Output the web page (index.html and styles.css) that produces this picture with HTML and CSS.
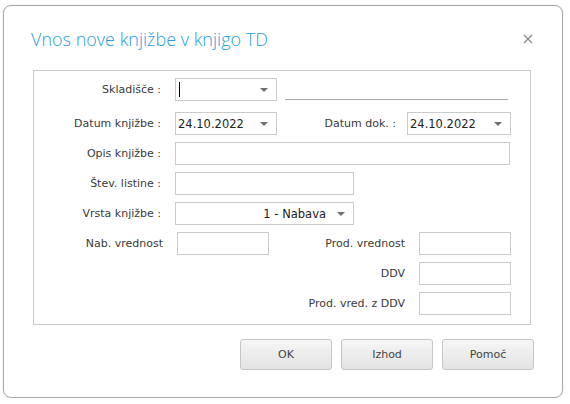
FILE: index.html
```html
<!DOCTYPE html>
<html lang="sl">
<head>
    <meta charset="UTF-8">
    <title>Vnos nove knjižbe v knjigo TD</title>
    <link rel="stylesheet" href="styles.css">
</head>
<body>
    <div class="dialog">
        <div class="dialog-head">
            <div class="dialog-title">Vnos nove knjižbe v knjigo TD</div>
            <svg class="close" width="10" height="10" viewBox="0 0 10 10">
                <path d="M1 1 L9 9 M9 1 L1 9" stroke="#8c8c8c" stroke-width="1.4"/>
            </svg>
        </div>

        <div class="form-box">
            <div class="row first">
                <div class="label">Skladišče :</div>
                <div class="field select w-102">
                    <span class="caret"></span>
                    <span class="arrow"></span>
                </div>
                <div class="underline"></div>
            </div>

            <div class="row">
                <div class="label">Datum knjižbe :</div>
                <div class="field select w-102">
                    <span class="value">24.10.2022</span>
                    <span class="arrow"></span>
                </div>
                <div class="label label-mid">Datum dok. :</div>
                <div class="field select w-104">
                    <span class="value">24.10.2022</span>
                    <span class="arrow"></span>
                </div>
            </div>

            <div class="row">
                <div class="label">Opis knjižbe :</div>
                <div class="field w-335"></div>
            </div>

            <div class="row">
                <div class="label">Štev. listine :</div>
                <div class="field w-179"></div>
            </div>

            <div class="row">
                <div class="label">Vrsta knjižbe :</div>
                <div class="field select w-179 right">
                    <span class="value">1 - Nabava</span>
                    <span class="arrow"></span>
                </div>
            </div>

            <div class="values">
                <div class="v-label">Nab. vrednost</div>
                <div class="field"></div>
                <div class="v-label right-col">Prod. vrednost</div>
                <div class="field"></div>

                <div></div>
                <div></div>
                <div class="v-label right-col">DDV</div>
                <div class="field"></div>

                <div></div>
                <div></div>
                <div class="v-label right-col">Prod. vred. z DDV</div>
                <div class="field"></div>
            </div>
        </div>

        <div class="buttons">
            <button class="btn">OK</button>
            <button class="btn">Izhod</button>
            <button class="btn">Pomoč</button>
        </div>
    </div>
</body>
</html>
```

FILE: styles.css
```css
* {
    margin: 0;
    padding: 0;
    box-sizing: border-box;
}

body {
    background: #fff;
    font-family: 'DejaVu Sans', sans-serif;
    font-size: 11px;
    color: #3a3a3a;
    padding: 5px 0 0 3px;
}

.dialog {
    width: 560px;
    height: 393px;
    border: 1px solid #a9a9a9;
    border-radius: 8px;
    background: #fff;
    box-shadow: 0 0 2px rgba(0, 0, 0, 0.12);
}

.dialog-head {
    display: flex;
    align-items: center;
    justify-content: space-between;
    height: 64px;
    padding: 0 29px 0 27px;
}

.dialog-title {
    font-family: 'Open Sans', sans-serif;
    font-weight: 300;
    font-size: 18px;
    color: #2a9ee0;
    padding-top: 1px;
}

.close {
    display: block;
    margin-top: 1px;
}

.form-box {
    margin-left: 29px;
    width: 498px;
    height: 255px;
    border: 1px solid #c9c9c9;
    padding-top: 7px;
}

.row {
    display: flex;
    align-items: center;
    height: 23px;
    margin-bottom: 7px;
}

.row.first {
    margin-bottom: 11px;
}

.label {
    width: 127px;
    margin-right: 14px;
    text-align: right;
    white-space: nowrap;
}

.label-mid {
    width: 119px;
    margin-right: 11px;
}

.field {
    height: 23px;
    border: 1px solid #cbcbcb;
    background: #fff;
    display: flex;
    align-items: center;
    padding-left: 2px;
    flex-shrink: 0;
}

.select {
    position: relative;
    padding-right: 22px;
}

.select.right {
    justify-content: flex-end;
    padding-right: 27px;
}

.value {
    color: #222;
    font-size: 11.5px;
    white-space: nowrap;
}

.caret {
    width: 1px;
    height: 15px;
    background: #000;
    margin-left: 1px;
}

.arrow {
    position: absolute;
    right: 8px;
    top: 9px;
    width: 0;
    height: 0;
    border-left: 4px solid transparent;
    border-right: 4px solid transparent;
    border-top: 4px solid #6f6f6f;
}

.underline {
    width: 223px;
    height: 1px;
    background: #a9a9a9;
    margin-left: 8px;
    align-self: flex-end;
    margin-bottom: 1px;
}

.w-102 { width: 102px; }
.w-104 { width: 104px; }
.w-179 { width: 179px; }
.w-335 { width: 335px; }

.values {
    display: grid;
    grid-template-columns: 129px 92px 122px 92px;
    column-gap: 14px;
    row-gap: 7px;
    grid-auto-rows: 23px;
    margin-top: 1px;
}

.v-label {
    display: flex;
    align-items: center;
    justify-content: flex-end;
    white-space: nowrap;
    overflow: hidden;
}

.right-col {
    margin-left: 17px;
}

.buttons {
    display: flex;
    justify-content: flex-end;
    gap: 9px;
    padding-right: 28px;
    margin-top: 14px;
}

.btn {
    width: 92px;
    height: 31px;
    border: 1px solid #c6c6c6;
    border-radius: 3px;
    background: linear-gradient(#f6f6f6, #e3e3e3);
    font-family: 'DejaVu Sans', sans-serif;
    font-size: 11px;
    font-weight: normal;
    color: #444;
}
```
